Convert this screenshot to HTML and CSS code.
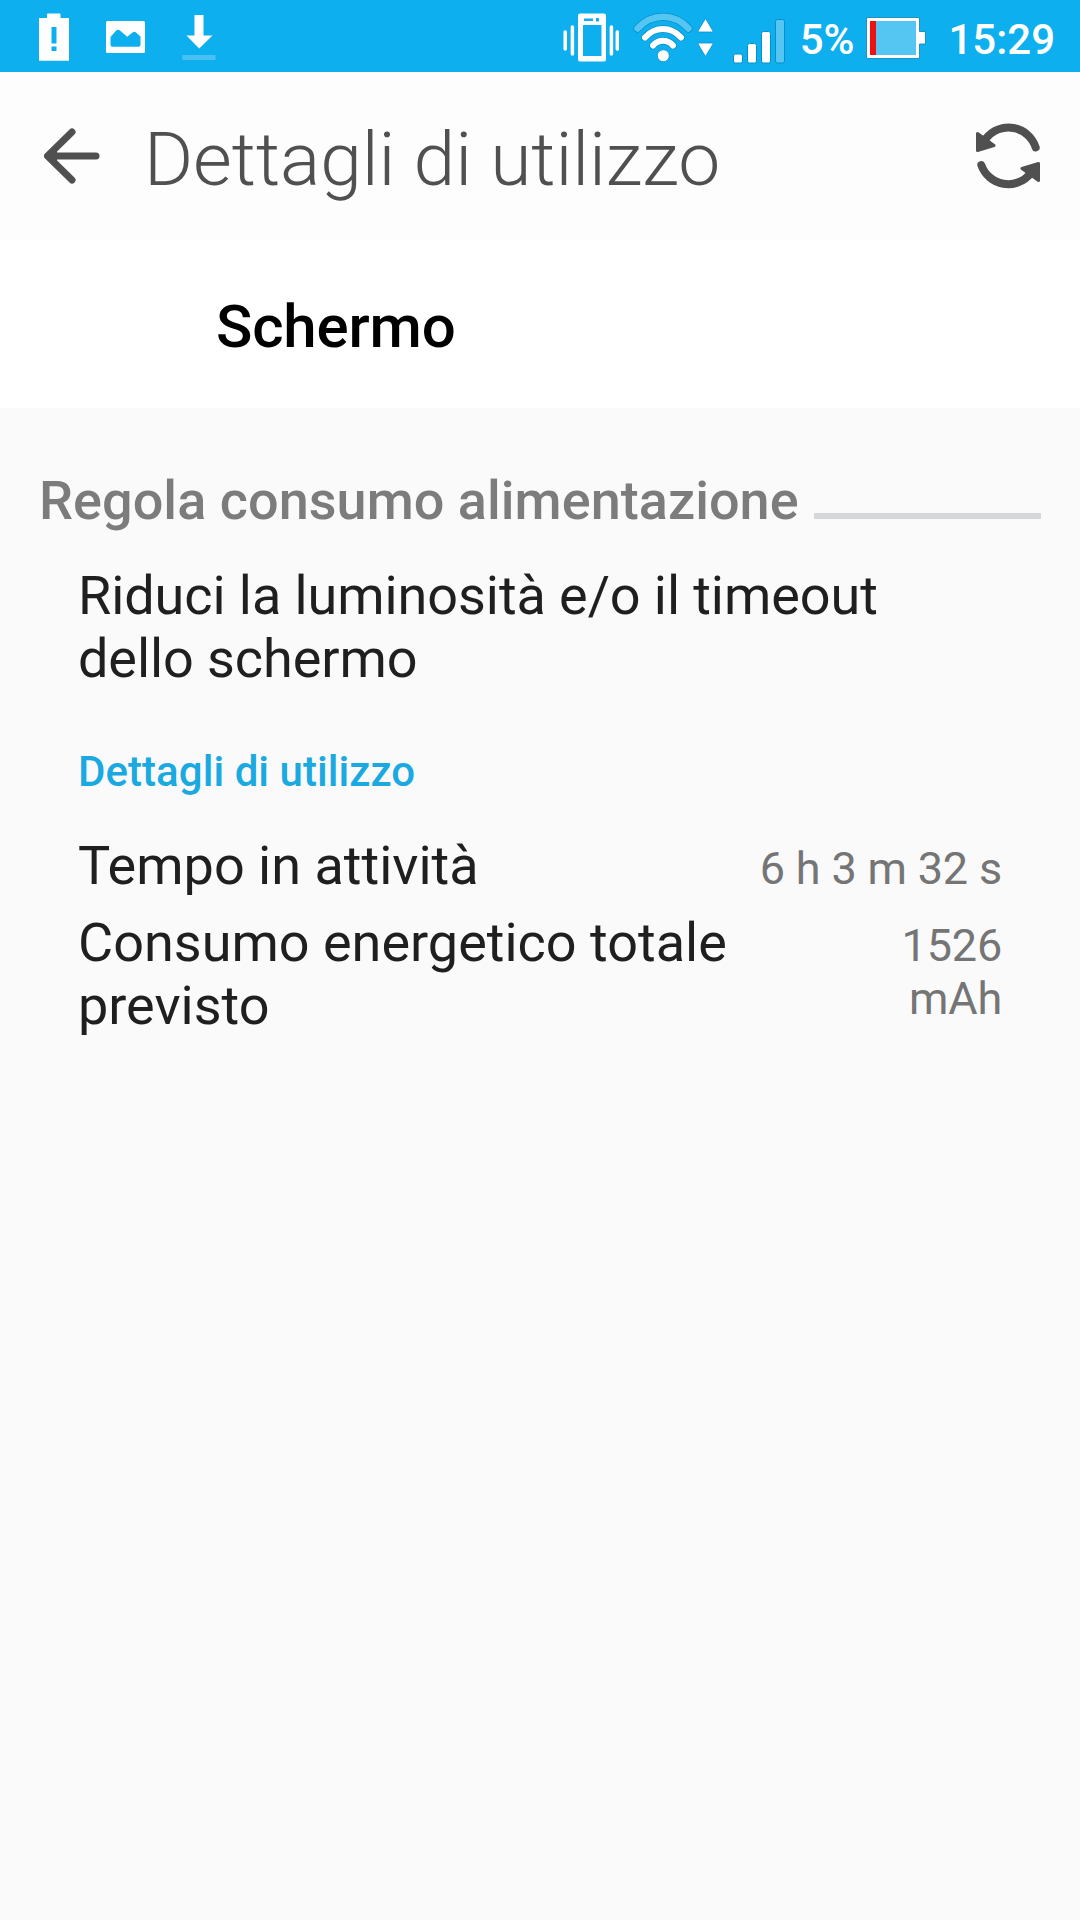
FILE: index.html
```
<!DOCTYPE html>
<html lang="it">
<head>
    <meta charset="utf-8">
    <title>Dettagli di utilizzo</title>
    <link rel="stylesheet" href="styles.css">
</head>
<body>
<div class="screen">
    <div class="status-bar">
        <div class="status-left">
            <svg width="30" height="72" viewBox="39 0 30 72">
                <path fill="#fff" fill-rule="evenodd" d="M39 18.5Q39 18 39.500 18H47V14.500Q47 13.500 48 13.500H59.500Q60.500 13.500 60.500 14.500V18H68.500Q69 18 69 18.500V60.700H39ZM51.500 27V43.500H56.500V27ZM51.500 46.500V51H56.500V46.500Z"/>
            </svg>
            <svg width="39" height="72" viewBox="106.500 0 39 72">
                <path fill="#fff" fill-rule="evenodd" d="M108 21H144Q145.500 21 145.500 22.500V51.500Q145.500 53 144 53H108Q106.500 53 106.500 51.500V22.500Q106.500 21 108 21ZM111 37V45Q111 46.700 112.700 46.700H139.300Q141 46.700 141 45V36.500L136.500 32.500Q134.700 31 133 32.500L127.700 36.800L120.500 30.500Q118.500 28.800 116.700 30.500Z"/>
            </svg>
            <svg width="34" height="72" viewBox="181.500 0 34 72">
                <path fill="#fff" d="M194 15H203V35.500H212L198.700 48.500L186 35.500H194Z"/>
                <rect x="181.700" y="55" width="33.300" height="5" fill="#48c1f2"/>
            </svg>
        </div>
        <div class="status-right">
            <svg class="vibrate" width="56" height="72" viewBox="563 0 56 72">
                <path fill="#fff" fill-rule="evenodd" d="M580 13.500H604Q606 13.500 606 15.500V59.500Q606 61.500 604 61.500H580Q578 61.500 578 59.500V15.500Q578 13.500 580 13.500ZM583 25V56H601.500V25ZM584 18.500V21H593V18.500ZM596 18V21.500H599V18Z"/>
                <path stroke="#fff" stroke-width="3.500" stroke-linecap="round" fill="none" d="M565.200 32V49M572.400 27V54M611.400 27V54M617.300 32V49"/>
            </svg>
            <svg class="wifi" width="82" height="72" viewBox="632 0 82 72">
                <g fill="none" stroke-linecap="round">
                    <path stroke="#078fcb" stroke-width="8" d="M637.500 28.500Q648.500 16.800 663 16.800T688.500 28.500"/>
                    <path stroke="#55c6f2" stroke-width="6.500" d="M637.500 28.500Q648.500 16.800 663 16.800T688.500 28.500"/>
                    <path stroke="#078fcb" stroke-width="7.500" d="M645 37.500Q652.500 29 663 29T681 37.500M653 45.500Q657 40.700 663 40.700T673 45.500"/>
                    <path stroke="#fff" stroke-width="6" d="M645 37.500Q652.500 29 663 29T681 37.500M653 45.500Q657 40.700 663 40.700T673 45.500"/>
                </g>
                <g fill="#fff" stroke="#078fcb" stroke-width=".8">
                    <circle cx="663.300" cy="55.700" r="6"/>
                    <path d="M705.500 18.500L713 31Q713 32 712 32H699Q698 32 698 31ZM705.500 56.500L698 44Q698 43 699 43H712Q713 43 713 44Z"/>
                </g>
            </svg>
            <svg class="signal" width="53" height="72" viewBox="733 0 53 72">
                <g fill="#fff" stroke="#078fcb" stroke-width="1">
                    <rect x="733.500" y="54" width="9" height="9" rx="2"/>
                    <rect x="747.500" y="43.500" width="9" height="19.500" rx="2"/>
                    <rect x="761.500" y="31.500" width="9" height="31.500" rx="2"/>
                    <rect x="775.500" y="19.500" width="9" height="43.500" rx="2" fill="#55c6f2"/>
                </g>
            </svg>
            <span class="percent">5%</span>
            <svg class="battery" width="60" height="72" viewBox="866 0 60 72">
                <path fill="#fff" stroke="#0a7fb3" stroke-width=".8" d="M868 17.500H918Q919.500 17.500 919.500 19V31.500H925.500V44H919.500V57Q919.500 58.500 918 58.500H868Q866.500 58.500 866.500 57V19Q866.500 17.500 868 17.500Z"/>
                <rect x="870" y="21" width="46" height="34" fill="#55c6f2"/>
                <rect x="870" y="21" width="6" height="34" fill="#ee1111"/>
            </svg>
            <span class="clock">15:29</span>
        </div>
    </div>

    <div class="app-bar">
        <svg class="back" width="56" height="56" viewBox="44 128 56 56">
            <path fill="none" stroke="#505050" stroke-width="7" stroke-linecap="round" stroke-linejoin="round" d="M72 132L47.500 156L72 180M48 156H96"/>
            <path fill="#505050" d="M47 156L57 149V163Z"/>
        </svg>
        <h1>Dettagli di utilizzo</h1>
        <svg class="refresh" width="66" height="68" viewBox="975 122 66 68">
            <path fill="none" stroke="#505050" stroke-width="8" stroke-linecap="round" d="M986 138.500A28.500 28.500 0 0 1 1035.700 147.500M981.300 165A28.500 28.500 0 0 0 1030.500 173.500"/>
            <path fill="#505050" stroke="#505050" stroke-width="3" stroke-linejoin="round" d="M977.500 133.500V150.500L994 145.500ZM1038.500 163.500V180.500L1022 168.500Z"/>
        </svg>
    </div>

    <div class="subject">Schermo</div>

    <div class="content">
        <div class="section-title">
            <h2>Regola consumo alimentazione</h2>
            <span class="rule"></span>
        </div>
        <p class="tip">Riduci la luminosità e/o il timeout dello schermo</p>
        <h3>Dettagli di utilizzo</h3>
        <div class="details">
            <div class="row">
                <span class="label">Tempo in attività</span>
                <span class="value">6 h 3 m 32 s</span>
            </div>
            <div class="row">
                <span class="label">Consumo energetico totale previsto</span>
                <span class="value narrow">1526 mAh</span>
            </div>
        </div>
    </div>
</div>
</body>
</html>
```
FILE: styles.css
```
* {
    box-sizing: border-box;
}

body, h1, h2, h3, p {
    margin: 0;
}

body {
    font-family: Roboto, sans-serif;
    background-color: #fafafa;
}

svg {
    display: block;
    flex: none;
}

.screen {
    width: 1080px;
    height: 1920px;
    overflow: hidden;
    background-color: #fafafa;
}

/* status bar */
.status-bar {
    display: flex;
    justify-content: space-between;
    height: 72px;
    padding: 0 25px 0 39px;
    background-color: #0eafee;
    color: #fff;
}

.status-left {
    display: flex;
    gap: 37px;
}

.status-right {
    display: flex;
    font-size: 42px;
    font-weight: 500;
    line-height: 49px;
    white-space: nowrap;
}

.wifi {
    margin-left: 13px;
}

.signal {
    margin-left: 19px;
}

.percent {
    padding-top: 15px;
    margin-left: 14px;
}

.battery {
    margin-left: 12px;
}

.clock {
    padding-top: 15px;
    margin-left: 22px;
}

/* title */
.app-bar {
    display: flex;
    align-items: center;
    height: 168px;
    padding: 0 39px 0 44px;
    background-color: #fdfdfd;
    color: #505050;
}

.app-bar h1 {
    flex: 1;
    margin-left: 44px;
    padding-top: 5px;
    font-size: 75px;
    font-weight: 300;
    line-height: 88px;
    letter-spacing: -0.05px;
}

.subject {
    height: 168px;
    padding: 52px 0 0 216px;
    background-color: #fff;
    color: #000;
    font-size: 60px;
    font-weight: 500;
    line-height: 70px;
    letter-spacing: -0.15px;
}

/* content */
.content {
    padding: 61px 39px 0;
}

.section-title {
    display: flex;
    align-items: baseline;
    gap: 15px;
    color: #7c7c7c;
}

.section-title h2 {
    font-size: 54px;
    font-weight: 500;
    line-height: 63px;
    letter-spacing: 0.04px;
}

.rule {
    flex: 1;
    height: 6px;
    background-color: #d6d7d8;
}

.tip {
    margin-top: 32px;
    padding: 0 39px;
    color: #1f1f1f;
    font-size: 54px;
    line-height: 63px;
    letter-spacing: -0.08px;
}

.content h3 {
    margin-top: 57px;
    padding-left: 39px;
    color: #1aa9e1;
    font-size: 42px;
    font-weight: 500;
    line-height: 49px;
    letter-spacing: 0.05px;
}

.details {
    display: flex;
    flex-direction: column;
    gap: 14px;
    margin-top: 38px;
    padding: 0 39px;
}

.row {
    display: flex;
    justify-content: space-between;
    align-items: baseline;
    color: #1f1f1f;
    font-size: 54px;
    line-height: 63px;
}

.label {
    max-width: 680px;
}

.value {
    color: #757575;
    font-size: 45px;
    line-height: 53px;
    letter-spacing: -0.18px;
    text-align: right;
}

.narrow {
    width: 110px;
}
```
